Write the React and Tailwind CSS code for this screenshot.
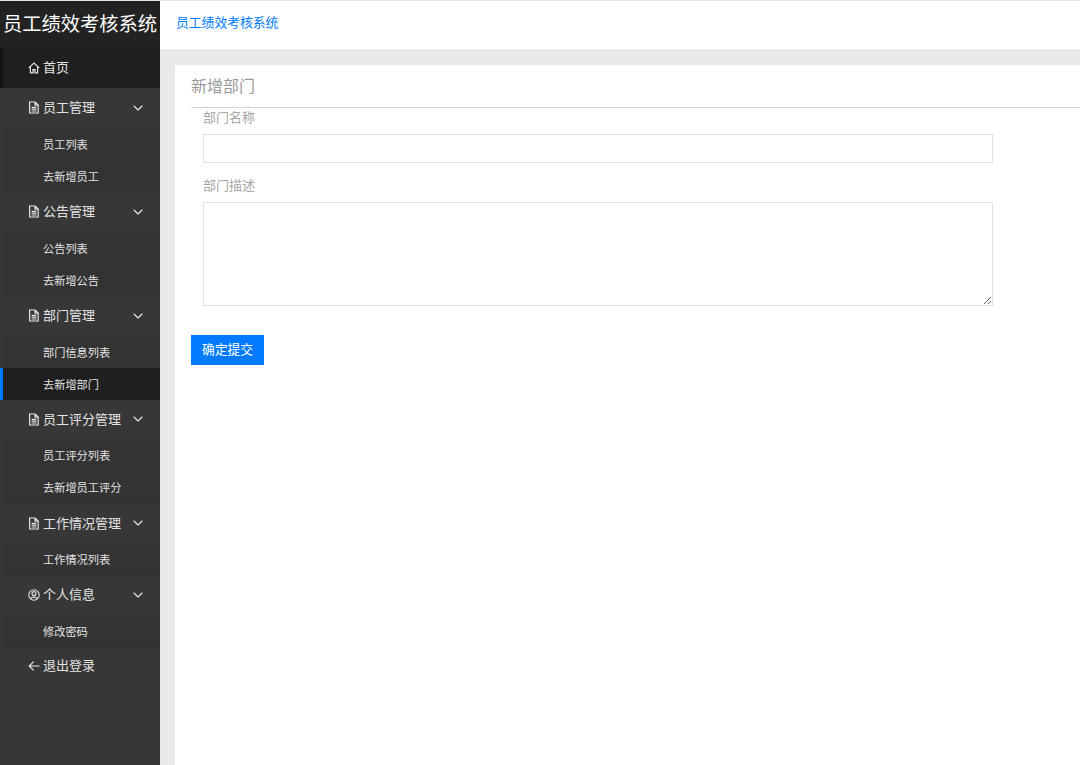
import { ChevronDown } from "lucide-react";

const FONT = "font-['Liberation_Sans','Noto_Sans_CJK_SC',sans-serif]";

function HomeIcon() {
  return (
    <svg width="12" height="12" viewBox="0 0 12 12" fill="none" stroke="currentColor" strokeWidth="1.2">
      <path d="M.8 5.9 6 1l5.2 4.9M2.4 4.8v6h2.6V7.6h2v3.2h2.6v-6" />
    </svg>
  );
}

function FileIcon() {
  return (
    <svg width="12" height="13" viewBox="0 0 12 13" fill="none" stroke="currentColor" strokeWidth="1.2">
      <path d="M1.6 1h5.6l3 3v8H1.6zM7 1v3.2h3.2M3.6 6.4h4.8M3.6 8.2h4.8M3.6 10h4.8" />
    </svg>
  );
}

function UserIcon() {
  return (
    <svg width="12" height="12" viewBox="0 0 12 12" fill="none" stroke="currentColor" strokeWidth="1.1">
      <circle cx="6" cy="6" r="5.2" />
      <circle cx="6" cy="4.6" r="2" />
      <path d="M2.6 9.8C3.4 7.6 8.6 7.6 9.4 9.8" />
    </svg>
  );
}

function BackIcon() {
  return (
    <svg width="12" height="12" viewBox="0 0 12 12" fill="none" stroke="currentColor" strokeWidth="1.2">
      <path d="M11.5 6H1.2M5.6 1.6 1.2 6l4.4 4.4" />
    </svg>
  );
}

const menu = [
  { title: "员工管理", icon: <FileIcon />, items: ["员工列表", "去新增员工"] },
  { title: "公告管理", icon: <FileIcon />, items: ["公告列表", "去新增公告"] },
  { title: "部门管理", icon: <FileIcon />, items: ["部门信息列表", "去新增部门"] },
  { title: "员工评分管理", icon: <FileIcon />, items: ["员工评分列表", "去新增员工评分"] },
  { title: "工作情况管理", icon: <FileIcon />, items: ["工作情况列表"] },
  { title: "个人信息", icon: <UserIcon />, items: ["修改密码"] },
];

function Sidebar() {
  return (
    <aside className="flex w-40 shrink-0 flex-col bg-[#373737] text-[#e4e4e4]">
      <div className="flex h-[47px] items-center justify-center whitespace-nowrap bg-[#222222] pt-[1px] text-[19.3px] text-white">
        员工绩效考核系统
      </div>
      <div className="flex h-10 items-center gap-[3px] border-l-[3px] border-[#141414] bg-[#1f1f1f] pl-[25px] text-[13px]">
        <HomeIcon />
        <span>首页</span>
      </div>
      {menu.map((group) => (
        <div key={group.title}>
          <div className="flex h-[39.85px] items-center pl-7 pr-[14px] text-[13px]">
            <span className="flex items-center gap-[3px]">
              {group.icon}
              {group.title}
            </span>
            <ChevronDown className="ml-auto" size={16} strokeWidth={1.75} />
          </div>
          <ul className="ml-[3px] bg-[#333333] text-[11.2px]">
            {group.items.map((item) => (
              <li
                key={item}
                className={`relative flex h-[32px] items-center pl-10 pt-[3px] ${item === "去新增部门" ? "bg-[#1f1f1f]" : ""}`}
              >
                {item === "去新增部门" && <span className="absolute -left-[3px] top-0 h-full w-[3px] bg-[#007bff]" />}
                {item}
              </li>
            ))}
          </ul>
        </div>
      ))}
      <div className="flex h-[38px] items-center gap-[3px] pl-7 text-[13px]">
        <BackIcon />
        <span>退出登录</span>
      </div>
    </aside>
  );
}

export default function App() {
  return (
    <div className={`flex h-[765px] w-[1080px] overflow-hidden border-t border-[#e4e4e4] bg-[#e9e9e9] ${FONT}`}>
      <Sidebar />
      <main className="flex min-w-0 flex-1 flex-col">
        <header className="flex h-12 items-center bg-white pb-[5px] pl-4 text-[12.8px] text-[#007bff]">
          员工绩效考核系统
        </header>
        <section className="ml-[15px] mt-4 flex-1 bg-white pl-4">
          <h2 className="flex h-[43px] items-center border-b border-[#d4d4d4] pt-[1px] text-[16px] text-[#999999]">新增部门</h2>
          <form className="flex flex-col items-start pl-3">
            <label className="text-[13px] leading-[19px] text-[#a6a6a6]">部门名称</label>
            <input className="mt-[7px] h-[29px] w-[790px] border border-[#dee2e6] bg-white" />
            <label className="mt-[13px] text-[13px] leading-[19px] text-[#a6a6a6]">部门描述</label>
            <textarea className="mt-[7px] block h-[104px] w-[790px] resize-y border border-[#dee2e6] bg-white" />
            <button
              type="button"
              className="-ml-3 mt-[29px] h-[30px] w-[73px] bg-[#007bff] text-[12.8px] text-white"
            >
              确定提交
            </button>
          </form>
        </section>
      </main>
    </div>
  );
}
